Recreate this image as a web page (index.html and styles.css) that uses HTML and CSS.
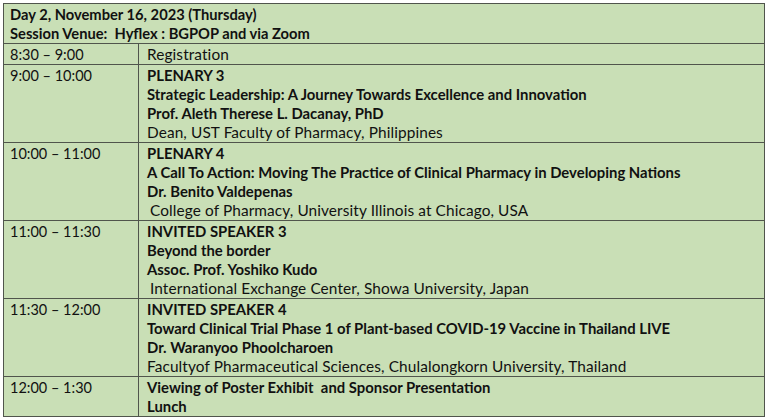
FILE: index.html
```html
<!DOCTYPE html>
<html>
<head>
<meta charset="utf-8">
<link rel="stylesheet" href="styles.css">
</head>
<body>
<table class="agenda">
  <colgroup><col class="c-time"><col class="c-item"></colgroup>
  <tr class="head">
    <td colspan="2">
      <div class="b">Day 2, November 16, 2023 (Thursday)</div>
      <div class="b">Session Venue:&nbsp; Hyflex : BGPOP and via Zoom</div>
    </td>
  </tr>
  <tr>
    <td class="time">8:30 – 9:00</td>
    <td class="item"><div>Registration</div></td>
  </tr>
  <tr>
    <td class="time">9:00 – 10:00</td>
    <td class="item">
      <div class="b">PLENARY 3</div>
      <div class="b">Strategic Leadership: A Journey Towards Excellence and Innovation</div>
      <div class="b">Prof. Aleth Therese L. Dacanay, PhD</div>
      <div>Dean, UST Faculty of Pharmacy, Philippines</div>
    </td>
  </tr>
  <tr>
    <td class="time">10:00 – 11:00</td>
    <td class="item">
      <div class="b">PLENARY 4</div>
      <div class="b">A Call To Action: Moving The Practice of Clinical Pharmacy in Developing Nations</div>
      <div class="b">Dr. Benito Valdepenas</div>
      <div class="ind">College of Pharmacy, University Illinois at Chicago, USA</div>
    </td>
  </tr>
  <tr>
    <td class="time">11:00 – 11:30</td>
    <td class="item">
      <div class="b">INVITED SPEAKER 3</div>
      <div class="b">Beyond the border</div>
      <div class="b">Assoc. Prof. Yoshiko Kudo</div>
      <div class="ind">International Exchange Center, Showa University, Japan</div>
    </td>
  </tr>
  <tr>
    <td class="time">11:30 – 12:00</td>
    <td class="item">
      <div class="b">INVITED SPEAKER 4</div>
      <div class="b">Toward Clinical Trial Phase 1 of Plant-based COVID-19 Vaccine in Thailand LIVE</div>
      <div class="b">Dr. Waranyoo Phoolcharoen</div>
      <div>Facultyof Pharmaceutical Sciences, Chulalongkorn University, Thailand</div>
    </td>
  </tr>
  <tr>
    <td class="time">12:00 – 1:30</td>
    <td class="item">
      <div class="b">Viewing of Poster Exhibit&nbsp; and Sponsor Presentation</div>
      <div class="b">Lunch</div>
    </td>
  </tr>
</table>
</body>
</html>
```
FILE: styles.css
```css
html, body {
  margin: 0;
  padding: 0;
  background: #ffffff;
}
body {
  padding: 3px 0 0 3px;
  font-family: Lato, "Open Sans", sans-serif;
  font-size: 15.4px;
  letter-spacing: 0.1px;
  color: #111;
}
.agenda {
  border-collapse: collapse;
  width: 762px;
  background: #c9dfb6;
  border: 1px solid #3a3a3a;
  table-layout: fixed;
}
.c-time { width: 135px; }
.agenda td {
  border: 1px solid #50554c;
  vertical-align: top;
  padding: 1px 6px 0;
  line-height: 19px;
}
.agenda td.time { font-size: 14.5px; letter-spacing: 0; }
.agenda td.item { padding-left: 8px; }
.b { font-weight: 700; font-size: 14.85px; letter-spacing: 0; }
.head .b { font-size: 14.7px; }
.ind { padding-left: 3px; }
```
